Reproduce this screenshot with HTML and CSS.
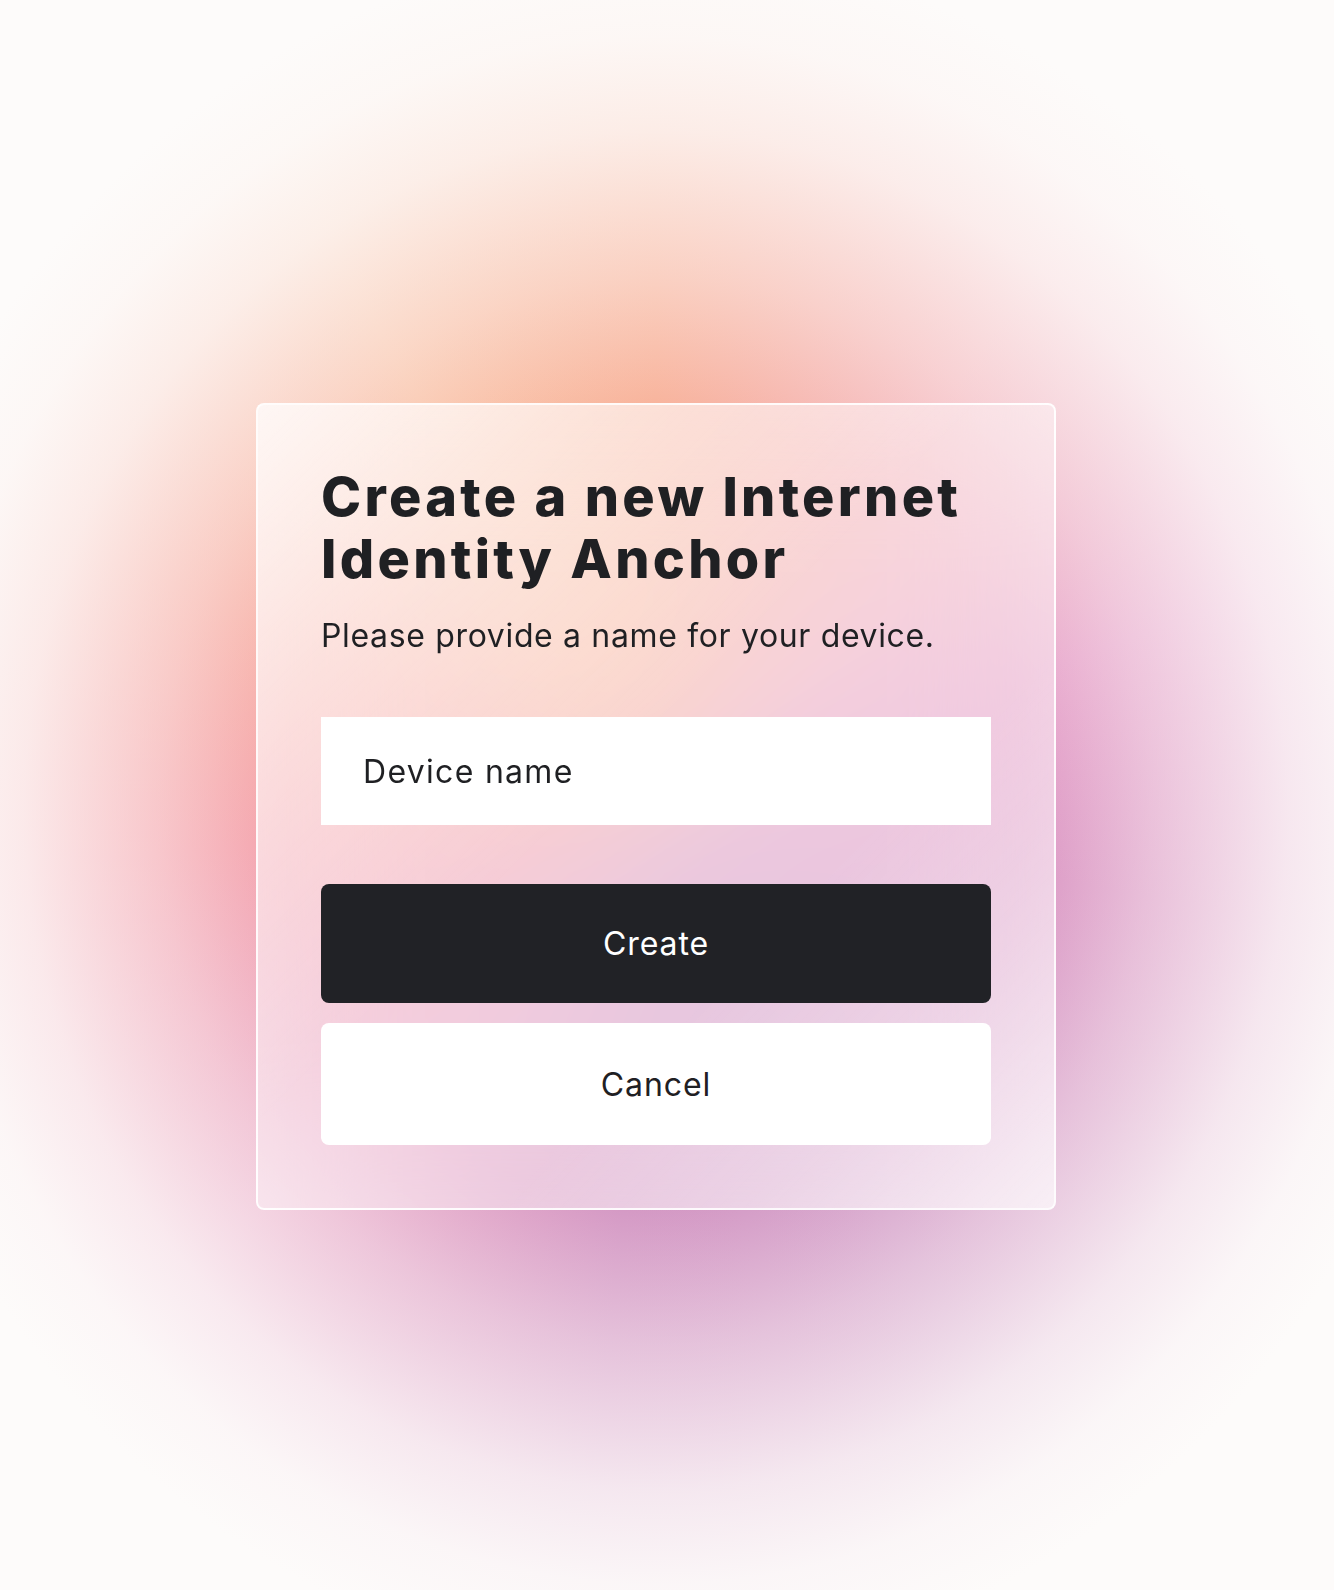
FILE: index.html
```html
<!DOCTYPE html>
<html lang="en">
<head>
<meta charset="utf-8">
<title>Create a new Internet Identity Anchor</title>
<link rel="stylesheet" href="styles.css">
</head>
<body>
<main class="page">
  <section class="card">
    <h1 class="title">Create a new Internet Identity Anchor</h1>
    <p class="lead">Please provide a name for your device.</p>
    <input class="field" type="text" placeholder="Device name">
    <button class="btn btn-primary" type="button">Create</button>
    <button class="btn btn-secondary" type="button">Cancel</button>
  </section>
</main>
</body>
</html>
```

FILE: styles.css
```css
html, body {
  margin: 0;
  height: 100%;
}

body {
  font-family: "Inter", "Open Sans", sans-serif;
  color: #1f2023;
  background-color: #fdfbfa;
  background-image:
    radial-gradient(ellipse 800px 860px at 656px 810px,
      rgba(253, 251, 250, 0) 0%,
      rgba(253, 251, 250, 0) 46%,
      rgba(253, 251, 250, 0.42) 62%,
      rgba(253, 251, 250, 0.8) 79%,
      rgba(253, 251, 250, 0.95) 90%,
      #fdfbfa 100%),
    conic-gradient(from 0deg at 656px 810px,
      #f8b29a 0deg,
      #f4b2b8 35deg,
      #e6a0c8 70deg,
      #da94c2 100deg,
      #d29ac6 150deg,
      #d498c4 185deg,
      #e9a4c4 225deg,
      #f4a0aa 265deg,
      #f7aaa0 295deg,
      #f9bea2 330deg,
      #f8b29a 360deg);
  background-repeat: no-repeat;
}

.page {
  box-sizing: border-box;
  min-height: 100%;
  display: flex;
  justify-content: center;
  align-items: flex-start;
  padding: 403px 22px 0 0;
}

.card {
  box-sizing: border-box;
  width: 800px;
  display: flex;
  flex-direction: column;
  padding: 61px 63px 63px;
  border: 2px solid rgba(255, 255, 255, 0.85);
  border-radius: 8px;
  background: linear-gradient(135deg,
    rgba(255, 255, 255, 0.78) 0%,
    rgba(255, 255, 255, 0.45) 45%,
    rgba(255, 255, 255, 0.45) 65%,
    rgba(255, 255, 255, 0.7) 100%);
  -webkit-backdrop-filter: blur(70px);
  backdrop-filter: blur(70px);
}

.title {
  margin: 0;
  font-size: 54px;
  line-height: 62px;
  font-weight: 800;
  letter-spacing: 3.3px;
  color: #1f2023;
}

.lead {
  margin: 26px 0 0;
  font-size: 32px;
  line-height: 40px;
  font-weight: 400;
  letter-spacing: 0.65px;
  color: #1f2023;
}

.field {
  box-sizing: border-box;
  margin: 61px 0 0;
  height: 108px;
  width: 100%;
  padding: 0 42px;
  border: 0;
  border-radius: 0;
  background: #ffffff;
  font-family: inherit;
  font-size: 32px;
  letter-spacing: 1.3px;
  color: #1f2023;
  outline: none;
}

.field::placeholder {
  color: #1f2023;
  opacity: 1;
}

.btn {
  box-sizing: border-box;
  width: 100%;
  border: 0;
  border-radius: 8px;
  font-family: inherit;
  font-size: 32px;
  font-weight: 400;
  letter-spacing: 0.9px;
  cursor: pointer;
}

.btn-primary {
  margin-top: 59px;
  height: 119px;
  background: #212226;
  color: #ffffff;
}

.btn-secondary {
  margin-top: 20px;
  height: 122px;
  background: #ffffff;
  color: #1f2023;
}
```
